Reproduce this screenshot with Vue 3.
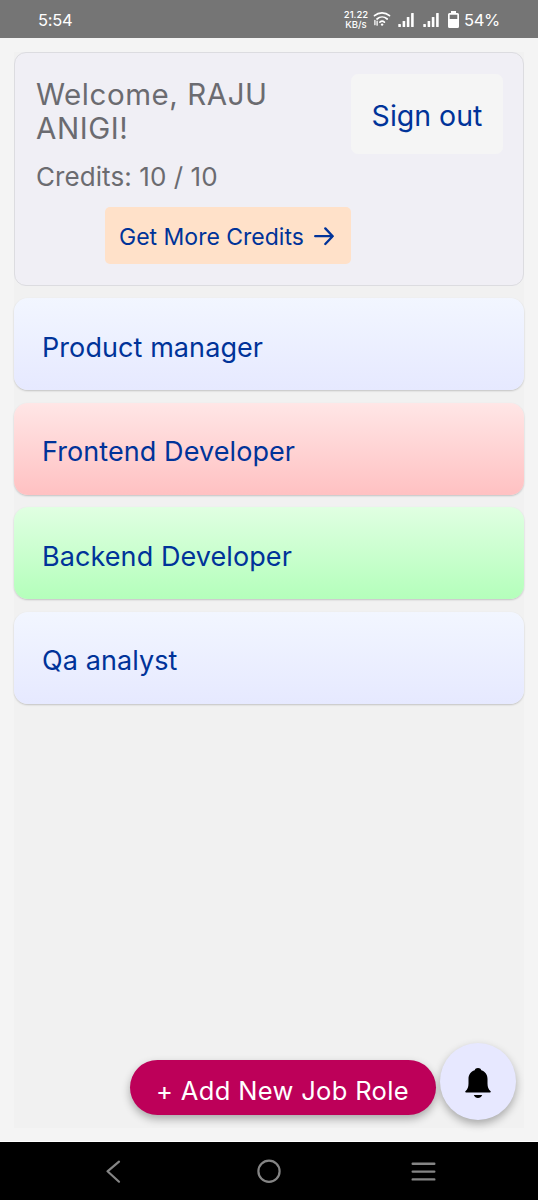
<script setup>
const roles = [
  { name: 'Product manager', tone: 'blue' },
  { name: 'Frontend Developer', tone: 'red' },
  { name: 'Backend Developer', tone: 'green' },
  { name: 'Qa analyst', tone: 'blue' },
]
</script>

<template>
  <div class="screen">
    <header class="status">
      <span class="clock">5:54</span>
      <div class="indicators">
        <div class="rate"><span>21.22</span><span>KB/s</span></div>
        <svg class="wifi" width="18" height="16" viewBox="0 0 18 16" fill="none" stroke="#fff" stroke-width="1.7" stroke-linecap="round">
          <path d="M1.500 4.600C5.800.9 12.200.9 16.500 4.600M4 8C7 5.300 11.200 5.300 14.200 8M6.900 11.100C8.300 9.900 10 9.900 11.400 11.100" />
          <circle cx="9.100" cy="13.600" r="1.200" fill="#fff" stroke="none" />
          <path d="M1.900 9.400v4.300M4.100 10.200v4" stroke-width="1.300" />
        </svg>
        <svg v-for="n in 2" :key="n" class="signal" width="17" height="16" viewBox="0 0 17 16" fill="#fff">
          <rect x="0.300" y="12" width="2.600" height="3" rx=".6" />
          <rect x="4.600" y="9" width="2.600" height="6" rx=".6" />
          <rect x="8.800" y="5" width="2.600" height="10" rx=".6" />
          <rect x="13.100" y="1" width="2.600" height="14" rx=".6" />
        </svg>
        <svg class="battery" width="11" height="18" viewBox="0 0 11 18">
          <path d="M3 0h5v2h1.500A1.500 1.500 0 0 1 11 3.500v12A1.500 1.500 0 0 1 9.500 17h-8A1.500 1.500 0 0 1 0 15.500v-12A1.500 1.500 0 0 1 1.500 2H3zM1.700 3.700V8h7.600V3.700z" fill="#fff" fill-rule="evenodd" />
        </svg>
        <span class="percent">54%</span>
      </div>
    </header>

    <main class="app">
      <div class="panel">
        <section class="account">
          <div class="info">
            <h1>Welcome, RAJU<br />ANIGI!</h1>
            <p>Credits: 10 / 10</p>
            <button class="more">
              <span>Get More Credits</span>
              <svg width="20" height="20" viewBox="0 0 20 20" fill="none" stroke="#003399" stroke-width="2.300" stroke-linecap="round" stroke-linejoin="round">
                <path d="M1.200 9.200H18.700M11.300 1.400L18.700 9.200L11.300 17" />
              </svg>
            </button>
          </div>
          <button class="signout"><span>Sign out</span></button>
        </section>

        <div v-for="role in roles" :key="role.name" class="role" :class="role.tone">
          <span>{{ role.name }}</span>
        </div>

        <div class="actions">
          <button class="add"><span>+ Add New Job Role</span></button>
          <button class="bell" aria-label="Notifications">
            <svg width="26" height="32" viewBox="0 0 26 32">
              <path d="M13 1c-1.700 0-2.900.9-3.300 2.200C5.700 4.600 3.500 7.800 3.500 12v4.500c0 4-1.100 5.800-2.900 7.400C-.2 24.700.1 25.600 1.200 25.600h23.600c1.100 0 1.400-.9.600-1.700-1.800-1.600-2.900-3.400-2.900-7.400V12c0-4.200-2.200-7.400-6.200-8.800C15.900 1.900 14.700 1 13 1zM8.800 28h8.400c-.8 2-2.300 3-4.200 3s-3.400-1-4.200-3z" fill="#000" />
            </svg>
          </button>
        </div>
      </div>
    </main>

    <nav class="system">
      <svg width="538" height="58" viewBox="0 0 538 58" fill="none" stroke="#858585" stroke-width="2.200" stroke-linecap="round" stroke-linejoin="round">
        <path d="M119 19.700L107.500 29.300L119 39.700" />
        <circle cx="269" cy="29.300" r="10.600" />
        <path d="M412.700 21.800h21.600M412.700 29.600h21.600M412.700 37.400h21.600" stroke-width="2.400" />
      </svg>
    </nav>
  </div>
</template>

<style>
body {
  margin: 0;
}
</style>

<style scoped>
.screen {
  width: 538px;
  height: 1200px;
  display: flex;
  flex-direction: column;
  overflow: hidden;
  font-family: Inter, "Liberation Sans", sans-serif;
  background: #f4f4f4;
}
.screen * {
  box-sizing: border-box;
}
.screen span,
h1,
p {
  white-space: nowrap;
}
button {
  font-family: inherit;
  border: 0;
  padding: 0;
  margin: 0;
}
.status {
  height: 38px;
  flex: none;
  display: flex;
  justify-content: space-between;
  align-items: center;
  padding: 2px 39px 0 38px;
  background: #757575;
  color: #fff;
}
.clock {
  font-size: 16.500px;
  letter-spacing: -0.3px;
}
.indicators {
  display: flex;
  align-items: center;
}
.rate {
  width: 24px;
  display: flex;
  flex-direction: column;
  align-items: center;
  font-size: 9.500px;
  line-height: 10px;
  font-weight: 500;
  margin-right: 5px;
}
.wifi {
  margin: -2px 7px 0 0;
}
.signal {
  margin-right: 8px;
}
.battery {
  margin: -1px 5px 0 0;
}
.percent {
  font-size: 16.500px;
  letter-spacing: -0.3px;
  width: 35px;
}
.app {
  flex: 1;
  min-height: 0;
  padding: 14px 14px 13px;
  border-bottom: 1px solid #fff;
}
.panel {
  height: 100%;
  display: flex;
  flex-direction: column;
  gap: 12.600px;
  background: #f1f1f1;
}
.account {
  height: 233.500px;
  flex: none;
  display: flex;
  justify-content: space-between;
  align-items: flex-start;
  padding: 21px 20px 20px 21px;
  border: 1px solid #dcdce0;
  border-radius: 12px;
  background: #f0eff5;
}
.info {
  width: 315px;
  display: flex;
  flex-direction: column;
  color: #6b6b70;
}
h1 {
  margin: 3px 0 0;
  font-size: 29.500px;
  font-weight: 400;
  line-height: 34px;
  letter-spacing: 0.550px;
}
p {
  margin: 14px 0 0;
  font-size: 26px;
  line-height: 36px;
  letter-spacing: 0.080px;
}
.more {
  align-self: flex-end;
  width: 246px;
  height: 57px;
  margin-top: 12px;
  padding: 2px 17px 0 14px;
  display: flex;
  align-items: center;
  justify-content: space-between;
  border-radius: 5px;
  background: #ffe1c9;
  color: #003399;
  font-size: 23px;
}
.signout {
  width: 152px;
  height: 80px;
  padding-top: 2px;
  border-radius: 7px;
  background: #f5f5f5;
  color: #003399;
  font-size: 28.500px;
}
.role {
  height: 92px;
  flex: none;
  display: flex;
  align-items: center;
  padding: 6px 28px 0;
  border-radius: 14px;
  color: #003399;
  font-size: 27px;
  letter-spacing: 0.080px;
  box-shadow: 0 1px 2px rgba(0, 0, 0, 0.200);
}
.blue {
  background: linear-gradient(#f2f6ff, #e6e9ff);
}
.red {
  background: linear-gradient(#ffe6e6, #ffc1c2);
}
.green {
  background: linear-gradient(#e0ffe2, #b4ffbb);
}
.actions {
  margin-top: auto;
  display: flex;
  justify-content: flex-end;
  align-items: center;
  gap: 4px;
  padding: 0 8px 8px 0;
}
.add {
  width: 306px;
  height: 55px;
  margin-top: 12px;
  padding: 6px 1px 0 0;
  border-radius: 28px;
  background: #bd0059;
  color: #fff;
  font-size: 25.500px;
  letter-spacing: 0.350px;
  box-shadow: 0 4px 8px rgba(0, 0, 0, 0.300);
}
.bell {
  width: 76px;
  height: 77px;
  display: flex;
  align-items: center;
  justify-content: center;
  padding-top: 2px;
  border-radius: 50%;
  background: #e7e8ff;
  box-shadow: 0 4px 8px rgba(0, 0, 0, 0.300);
}
.system {
  height: 58px;
  flex: none;
  background: #000;
}
.system svg {
  display: block;
}
</style>
